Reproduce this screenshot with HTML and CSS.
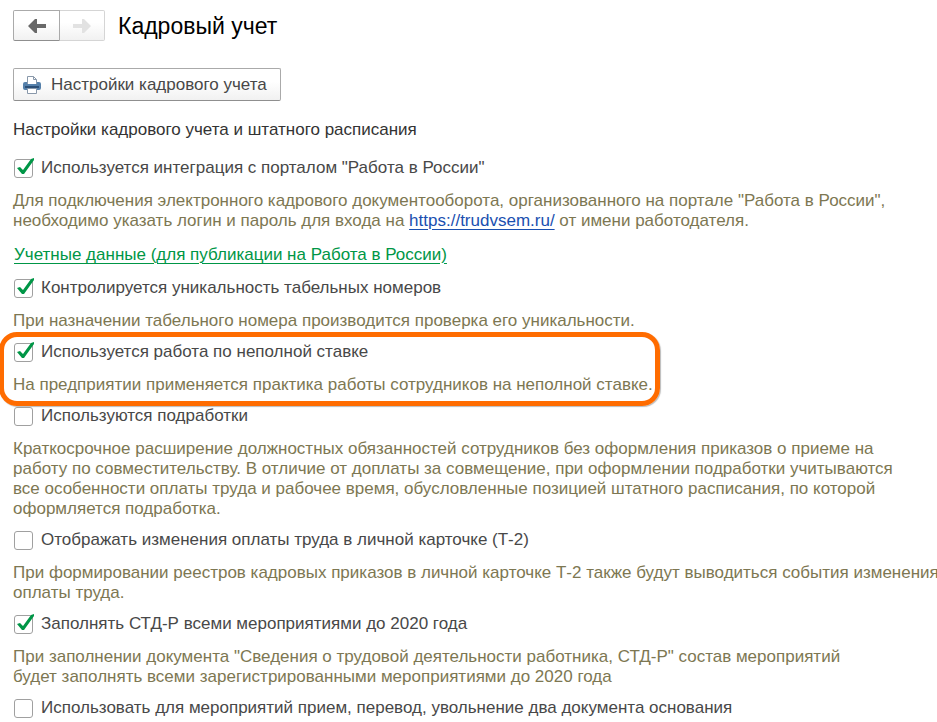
FILE: index.html
```html
<!DOCTYPE html>
<html lang="ru">
<head>
<meta charset="utf-8">
<title>Кадровый учет</title>
<link rel="stylesheet" href="styles.css">
</head>
<body>
<header class="top">
  <nav class="history" aria-label="История">
    <button type="button" class="back" aria-label="Назад"><svg width="18" height="14" viewBox="0 0 18 14"><path d="M0 7L7 0H9V5H18V9H9V14H7Z" fill="#696969"/></svg></button>
    <button type="button" class="forward" aria-label="Вперед" disabled><svg width="18" height="14" viewBox="0 0 18 14"><path d="M18 7L11 0H9V5H0V9H9V14H11Z" fill="#e2e2e2"/></svg></button>
  </nav>
  <h1>Кадровый учет</h1>
</header>
<button type="button" class="print">
  <svg width="18" height="18" viewBox="0 0 18 18"><path d="M4.500 8V.5H10.500L13.500 3.500V8" fill="#fff" stroke="#8998aa"/><path d="M10.500.5V3.500H13.500" fill="none" stroke="#8998aa"/><path d="M2 6H4V8H14V6H16Q18 6 18 8V12Q18 14 16 14H2Q0 14 0 12V8Q0 6 2 6Z" fill="#5580aa"/><path d="M2 11H16" stroke="#2c4f76" stroke-width="2"/><path d="M4.500 12.500H13.500V17.500H4.500Z" fill="#fff" stroke="#8998aa"/></svg>
  Настройки кадрового учета
</button>
<main>
  <h2>Настройки кадрового учета и штатного расписания</h2>
  <section class="option">
    <label><span class="box"><input type="checkbox" checked><svg viewBox="0 0 20 20"><path d="M3 9L6 8L9 11L17 0L20 -1V1L10 15H8Z"/></svg></span>Используется интеграция с порталом "Работа в России"</label>
    <p>Для подключения электронного кадрового документооборота, организованного на портале "Работа в России",<br>необходимо указать логин и пароль для входа на <a href="https://trudvsem.ru/">https://trudvsem.ru/</a> от имени работодателя.</p>
    <a class="account" href="#account">Учетные данные (для публикации на Работа в России)</a>
  </section>
  <section class="option">
    <label><span class="box"><input type="checkbox" checked><svg viewBox="0 0 20 20"><path d="M3 9L6 8L9 11L17 0L20 -1V1L10 15H8Z"/></svg></span>Контролируется уникальность табельных номеров</label>
    <p>При назначении табельного номера производится проверка его уникальности.</p>
  </section>
  <section class="option marked">
    <label><span class="box"><input type="checkbox" checked><svg viewBox="0 0 20 20"><path d="M3 9L6 8L9 11L17 0L20 -1V1L10 15H8Z"/></svg></span>Используется работа по неполной ставке</label>
    <p>На предприятии применяется практика работы сотрудников на неполной ставке.</p>
  </section>
  <section class="option">
    <label><span class="box"><input type="checkbox"></span>Используются подработки</label>
    <p>Краткосрочное расширение должностных обязанностей сотрудников без оформления приказов о приеме на<br>работу по совместительству. В отличие от доплаты за совмещение, при оформлении подработки учитываются<br>все особенности оплаты труда и рабочее время, обусловленные позицией штатного расписания, по которой<br>оформляется подработка.</p>
  </section>
  <section class="option">
    <label><span class="box"><input type="checkbox"></span>Отображать изменения оплаты труда в личной карточке (Т-2)</label>
    <p>При формировании реестров кадровых приказов в личной карточке Т-2 также будут выводиться события изменения<br>оплаты труда.</p>
  </section>
  <section class="option">
    <label><span class="box"><input type="checkbox" checked><svg viewBox="0 0 20 20"><path d="M3 9L6 8L9 11L17 0L20 -1V1L10 15H8Z"/></svg></span>Заполнять СТД-Р всеми мероприятиями до 2020 года</label>
    <p>При заполнении документа "Сведения о трудовой деятельности работника, СТД-Р" состав мероприятий<br>будет заполнять всеми зарегистрированными мероприятиями до 2020 года</p>
  </section>
  <section class="option">
    <label><span class="box"><input type="checkbox"></span>Использовать для мероприятий прием, перевод, увольнение два документа основания</label>
  </section>
</main>
</body>
</html>
```
FILE: styles.css
```css
* { box-sizing: border-box; }
body { margin: 0; padding: 10px 0 0 13px; background: #fff; color: #484848; font: 17px/20px "Liberation Sans", Arial, sans-serif; overflow-x: hidden; }
.top { display: flex; align-items: center; gap: 13px; height: 31px; }
.history { display: flex; }
button { font: inherit; color: inherit; background: linear-gradient(#fff 40%, #f1f1f1); border: 1px solid #aaa; border-bottom-color: #8f8f8f; border-radius: 2px; }
.history button { display: flex; align-items: center; justify-content: center; width: 47px; height: 31px; padding: 0; }
.history .back { border-radius: 2px 0 0 2px; }
.history .forward { width: 45px; border-color: #d5d5d5; border-left: 0; border-radius: 0 2px 2px 0; }
h1 { margin: 0; color: #000; font-size: 23px; line-height: 28px; font-weight: 400; }
.print { display: flex; align-items: center; gap: 10px; height: 33px; margin-top: 27px; padding: 0 13px 0 9px; }
h2 { margin: 19px 0 18px; font-size: 17px; line-height: 20px; font-weight: 400; color: #333; }
.option { position: relative; width: max-content; margin-bottom: 11px; }
.option:last-child { margin-bottom: 0; }
.option label { display: flex; align-items: center; gap: 8px; height: 20px; }
.option p { margin: 13px 0 0; color: #7d7752; white-space: nowrap; }
.option p a { color: #1a50b0; }
.account { display: block; width: max-content; margin: 14px 0 13px 1px; color: #009646; }
a { text-underline-offset: 3px; text-decoration-thickness: 1px; }
.box { position: relative; width: 19px; height: 19px; margin-left: 1px; align-self: flex-end; }
.box input { display: block; appearance: none; width: 100%; height: 100%; margin: 0; border: 1px solid #a0a0a0; border-radius: 3px; background: #fff; }
.box svg { position: absolute; top: 0; left: 0; width: 20px; height: 20px; overflow: visible; display: none; pointer-events: none; fill: #009646; }
.box input:checked + svg { display: block; }
.marked::after { content: ""; position: absolute; top: -10px; right: -7px; bottom: -11px; left: -14px; border: 5px solid #ff6c00; border-radius: 18px; box-shadow: 1px 1px 1px #bbb; pointer-events: none; }
```
